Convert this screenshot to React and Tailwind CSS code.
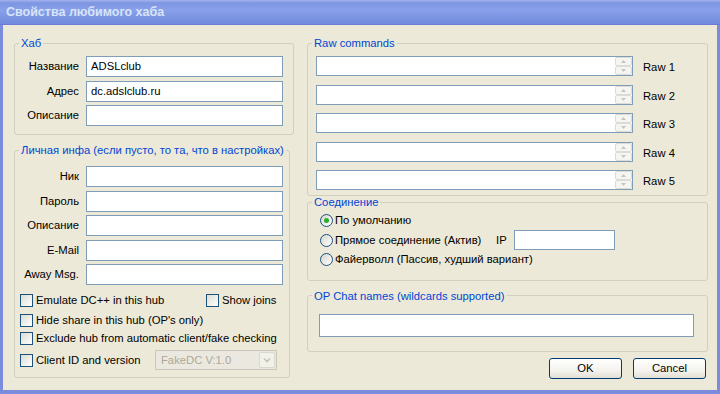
const legendCls = "ml-[4px] px-[2px] leading-[14px] text-[#0046d5]";
const boxCls = "border border-[#d0d0bf] rounded-[3px] min-w-0";

function Field({ label, value }) {
  return (
    <div className="flex items-center gap-[7px]">
      <span className="w-[64px] text-right whitespace-nowrap">{label}</span>
      <div className="w-[197px] h-[21px] border border-[#7f9db9] bg-white px-[4px] flex items-center">
        {value}
      </div>
    </div>
  );
}

function Tri({ down }) {
  return (
    <svg width="5" height="3" viewBox="0 0 5 3">
      <path d={down ? "M0 0h5L2.5 3z" : "M0 3h5L2.5 0z"} fill="#c7c6bd" />
    </svg>
  );
}

function RawRow({ n }) {
  return (
    <div className="flex items-center gap-[10px]">
      <div className="w-[317px] h-[20px] border border-[#7f9db9] bg-white flex justify-end">
        <div className="w-[17px] h-full flex flex-col">
          <div className="flex-1 border border-[#dedcd2] rounded-[2px] bg-[#f5f5f1] flex items-center justify-center">
            <Tri />
          </div>
          <div className="flex-1 border border-[#dedcd2] rounded-[2px] bg-[#f5f5f1] flex items-center justify-center">
            <Tri down />
          </div>
        </div>
      </div>
      <span className="pt-[3px]">Raw {n}</span>
    </div>
  );
}

function Check({ label, className = "" }) {
  return (
    <div className={`flex items-center gap-[3px] whitespace-nowrap ${className}`}>
      <span className="w-[13px] h-[13px] shrink-0 border border-[#1c5180] bg-[linear-gradient(135deg,#dcdcd4,#ffffff)]" />
      <span>{label}</span>
    </div>
  );
}

function Radio({ label, checked }) {
  return (
    <div className="flex items-center gap-[2px] whitespace-nowrap">
      <span className="w-[13px] h-[13px] shrink-0 rounded-full border border-[#1c5180] bg-[linear-gradient(135deg,#d6d6ce,#ffffff)] flex items-center justify-center">
        {checked && <span className="w-[5px] h-[5px] rounded-full bg-[#2bac2b]" />}
      </span>
      <span>{label}</span>
    </div>
  );
}

function Button({ children }) {
  return (
    <button className="w-[73px] h-[21px] rounded-[3px] border border-[#003c74] bg-[linear-gradient(to_bottom,#ffffff,#f4f3ee_60%,#e2dfd4)] text-[11.25px] text-black">
      {children}
    </button>
  );
}

export default function App() {
  return (
    <div className="w-[720px] h-[394px] bg-[#7c8cdc] flex flex-col font-['Liberation_Sans',Arial,sans-serif] text-[11.25px] text-black">
      {/* Title bar */}
      <div className="h-[25px] shrink-0 flex items-center pl-[6px] border-b border-[#6c7bd6] bg-[linear-gradient(to_bottom,#a4b3ee_0px,#7e95e2_3px,#88a1ea_10px,#7b93e1_18px,#7189dc_24px)]">
        <span className="text-[12.5px] font-bold text-[#d8e4f8] leading-none">Свойства любимого хаба</span>
      </div>

      {/* Dialog body */}
      <div className="flex-1 mx-[3px] mb-[4px] bg-[#ece9d8] flex gap-[13px] pl-[11px] pt-[11px]">
        {/* Left column */}
        <div className="w-[280px] flex flex-col">
          <fieldset className={`${boxCls} w-[280px] pt-[6px] pb-[8px]`}>
            <legend className={legendCls}>Хаб</legend>
            <div className="flex flex-col gap-[3.5px]">
              <Field label="Название" value="ADSLclub" />
              <Field label="Адрес" value="dc.adslclub.ru" />
              <Field label="Описание" value="" />
            </div>
          </fieldset>

          <fieldset className={`${boxCls} w-[276px] mt-[8px] pt-[9px] pb-[7px]`}>
            <legend className={legendCls}>Личная инфа (если пусто, то та, что в настройках)</legend>
            <div className="flex flex-col gap-[3.5px]">
              <Field label="Ник" value="" />
              <Field label="Пароль" value="" />
              <Field label="Описание" value="" />
              <Field label="E-Mail" value="" />
              <Field label="Away Msg." value="" />
            </div>
            <div className="pl-[5px] mt-[9px] flex flex-col">
              <div className="h-[13px] flex items-center">
                <Check label="Emulate DC++ in this hub" className="w-[186px]" />
                <Check label="Show joins" />
              </div>
              <div className="h-[13px] mt-[7px] flex items-center">
                <Check label="Hide share in this hub (OP's only)" />
              </div>
              <div className="h-[13px] mt-[5px] flex items-center">
                <Check label="Exclude hub from automatic client/fake checking" />
              </div>
              <div className="h-[20px] mt-[5px] flex items-center">
                <Check label="Client ID and version" className="w-[135px]" />
                <div className="w-[122px] h-[20px] border border-[#c9c7ba] bg-[#ebe9df] flex items-center justify-between pl-[5px] pr-[1px]">
                  <span className="text-[#aca899]">FakeDC V:1.0</span>
                  <div className="w-[16px] h-[16px] rounded-[2px] border border-[#dad8cd] bg-[#f2f1ea] flex items-center justify-center">
                    <svg width="8" height="6" viewBox="0 0 8 6">
                      <path d="M1 1.5l3 3 3-3" fill="none" stroke="#c4c2b8" strokeWidth="1.6" />
                    </svg>
                  </div>
                </div>
              </div>
            </div>
          </fieldset>
        </div>

        {/* Right column */}
        <div className="w-[401px] flex flex-col">
          <fieldset className={`${boxCls} pt-[6px] pb-[5px]`}>
            <legend className={legendCls}>Raw commands</legend>
            <div className="pl-[8px] flex flex-col gap-[8.5px]">
              <RawRow n={1} />
              <RawRow n={2} />
              <RawRow n={3} />
              <RawRow n={4} />
              <RawRow n={5} />
            </div>
          </fieldset>

          <fieldset className={`${boxCls} -mt-px pt-[2px] pb-[10px]`}>
            <legend className={legendCls}>Соединение</legend>
            <div className="pl-[12px] flex flex-col">
              <div className="h-[19.5px] flex items-center">
                <Radio label="По умолчанию" checked />
              </div>
              <div className="h-[19.5px] flex items-center">
                <div className="w-[176px]">
                  <Radio label="Прямое соединение (Актив)" />
                </div>
                <span className="w-[18px]">IP</span>
                <div className="w-[101px] h-[20px] border border-[#7f9db9] bg-white" />
              </div>
              <div className="h-[19.5px] flex items-center">
                <Radio label="Файерволл (Пассив, худший вариант)" />
              </div>
            </div>
          </fieldset>

          <fieldset className={`${boxCls} mt-[8px] pt-[11px] pb-[14px]`}>
            <legend className={legendCls}>OP Chat names (wildcards supported)</legend>
            <div className="pl-[11px]">
              <div className="w-[375px] h-[23px] border border-[#7f9db9] bg-white" />
            </div>
          </fieldset>

          <div className="mt-[6px] flex justify-end gap-[11px] pr-[2px]">
            <Button>OK</Button>
            <Button>Cancel</Button>
          </div>
        </div>
      </div>
    </div>
  );
}
